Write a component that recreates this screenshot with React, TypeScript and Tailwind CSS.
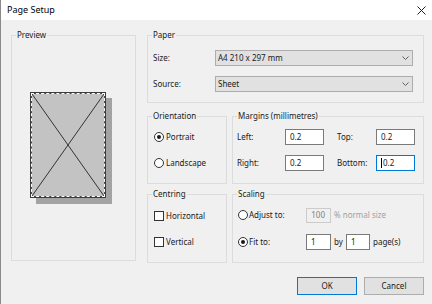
import type { ReactNode } from "react";

function Group({ label, className, children }: { label: string; className: string; children?: ReactNode }) {
  return (
    <div className={`border border-[#dcdcdc] ${className}`}>
      <div className="-mt-[7px] ml-[4px] h-[12px] w-fit bg-[#f0f0f0] px-[1px] leading-[12px]">{label}</div>
      {children}
    </div>
  );
}

function Chevron() {
  return (
    <svg width="7" height="4" viewBox="0 0 7 4" className="text-[#606060]">
      <polyline points="0.5,0.5 3.5,3.5 6.5,0.5" fill="none" stroke="currentColor" strokeWidth="1" />
    </svg>
  );
}

function Select({ value }: { value: string }) {
  return (
    <div className="flex h-[16px] flex-1 items-center justify-between border border-[#adadad] bg-[#e1e1e1] pl-[2px] pr-[3px]">
      <span>{value}</span>
      <Chevron />
    </div>
  );
}

function Radio({ checked }: { checked?: boolean }) {
  return (
    <span className="flex h-[10px] w-[10px] shrink-0 items-center justify-center rounded-full border border-[#333] bg-white">
      {checked && <span className="h-[4px] w-[4px] rounded-full bg-[#1a1a1a]" />}
    </span>
  );
}

function Check() {
  return <span className="h-[10px] w-[10px] shrink-0 border border-[#333] bg-white" />;
}

function Field({ value, w, focused }: { value: string; w: string; focused?: boolean }) {
  return (
    <div
      className={`flex h-[16px] items-center border bg-white pl-[4px] ${w} ${
        focused ? "border-[#0078d7]" : "border-[#7a7a7a]"
      }`}
    >
      {focused && <span className="mr-[1px] h-[10px] w-[1px] bg-black" />}
      {value}
    </div>
  );
}

export default function App() {
  return (
    <div className="h-[304px] w-[432px] overflow-hidden border-l border-[#8a8a8a] bg-[#f0f0f0] font-['Noto_Sans',sans-serif] text-[8px] text-[#1a1a1a]">
      {/* Title bar */}
      <div className="flex h-[20px] items-center justify-between bg-white pl-[6px] pr-[6px]">
        <span className="text-[9px] text-black">Page Setup</span>
        <svg width="9" height="9" viewBox="0 0 9 9">
          <path d="M0.5 0.5 L8.5 8.5 M8.5 0.5 L0.5 8.5" stroke="#222" strokeWidth="1" />
        </svg>
      </div>

      <div className="flex gap-[11px] pl-[10px] pt-[15px]">
        <Group label="Preview" className="h-[226px] w-[125px]">
          <div className="ml-[18px] mt-[51px] h-[106px] w-[76px] border border-[#3c3c3c] bg-[#4a4a4a] shadow-[6px_6px_0_#a3a3a3]">
            <div className="h-full w-full border border-dashed border-white bg-[#c3c3c3] bg-clip-padding">
              <svg width="100%" height="100%" viewBox="0 0 100 100" preserveAspectRatio="none" className="block">
                <path d="M0 0 L100 100 M100 0 L0 100" stroke="#333" strokeWidth="1" vectorEffect="non-scaling-stroke" />
              </svg>
            </div>
          </div>
        </Group>

        <div className="flex w-[277px] flex-col">
          <Group label="Paper" className="h-[68px]">
            <div className="mt-[9px] flex flex-col gap-[10px] pl-[5px] pr-[10px]">
              <div className="flex items-center">
                <span className="w-[62px]">Size:</span>
                <Select value="A4 210 x 297 mm" />
              </div>
              <div className="flex items-center">
                <span className="w-[62px]">Source:</span>
                <Select value="Sheet" />
              </div>
            </div>
          </Group>

          <div className="mt-[13px] flex gap-[5px]">
            <Group label="Orientation" className="h-[68px] w-[80px]">
              <div className="mt-[9px] flex flex-col gap-[14px] pl-[6px]">
                <div className="flex h-[12px] items-center gap-[2px]">
                  <Radio checked />
                  <span>Portrait</span>
                </div>
                <div className="flex h-[12px] items-center gap-[2px]">
                  <Radio />
                  <span>Landscape</span>
                </div>
              </div>
            </Group>
            <Group label="Margins (millimetres)" className="h-[68px] w-[192px]">
              <div className="mt-[7px] grid grid-cols-[48px_39px_13px_39px_39px] gap-y-[10px] pl-[4px]">
                <span className="self-center">Left:</span>
                <Field value="0.2" w="w-[39px]" />
                <span />
                <span className="self-center">Top:</span>
                <Field value="0.2" w="w-[39px]" />
                <span className="self-center">Right:</span>
                <Field value="0.2" w="w-[39px]" />
                <span />
                <span className="self-center">Bottom:</span>
                <Field value="0.2" w="w-[39px]" focused />
              </div>
            </Group>
          </div>

          <div className="mt-[10px] flex gap-[5px]">
            <Group label="Centring" className="h-[69px] w-[80px]">
              <div className="mt-[10px] flex flex-col gap-[14px] pl-[6px]">
                <div className="flex h-[12px] items-center gap-[2px]">
                  <Check />
                  <span>Horizontal</span>
                </div>
                <div className="flex h-[12px] items-center gap-[2px]">
                  <Check />
                  <span>Vertical</span>
                </div>
              </div>
            </Group>
            <Group label="Scaling" className="h-[69px] w-[192px]">
              <div className="mt-[7px] flex flex-col gap-[11px] pl-[5px]">
                <div className="flex h-[16px] items-center">
                  <div className="flex w-[68px] items-center gap-[1px]">
                    <Radio />
                    <span>Adjust to:</span>
                  </div>
                  <div className="flex h-[15px] w-[25px] items-center justify-end border border-[#cccccc] bg-[#f0f0f0] pr-[5px] text-[#808080]">
                    100
                  </div>
                  <span className="ml-[3px] text-[#a0a0a0]">% normal size</span>
                </div>
                <div className="flex h-[16px] items-center">
                  <div className="flex w-[68px] items-center gap-[1px]">
                    <Radio checked />
                    <span>Fit to:</span>
                  </div>
                  <Field value="1" w="w-[25px]" />
                  <span className="ml-[3px] w-[12px]">by</span>
                  <Field value="1" w="w-[24px]" />
                  <span className="ml-[3px]">page(s)</span>
                </div>
              </div>
            </Group>
          </div>
        </div>
      </div>

      <div className="mt-[14px] flex justify-end gap-[7px] pr-[8px]">
        <button className="h-[18px] w-[60px] border border-[#0078d7] bg-[#e1e1e1]">OK</button>
        <button className="h-[18px] w-[60px] border border-[#adadad] bg-[#e1e1e1]">Cancel</button>
      </div>
    </div>
  );
}
